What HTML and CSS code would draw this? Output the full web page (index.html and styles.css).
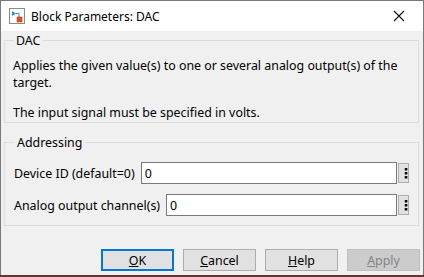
FILE: index.html
```html
<!DOCTYPE html>
<html lang="en">
<head>
    <meta charset="UTF-8">
    <title>Block Parameters: DAC</title>
    <link rel="stylesheet" href="styles.css">
</head>
<body>

<div class="window">
    <div class="titlebar">
        <svg class="app-icon" width="16" height="16" viewBox="0 0 16 16">
            <rect x="0.5" y="0.5" width="15" height="15" fill="#fff" stroke="#8a8a8a"/>
            <path d="M3 3 L3 8 L7 5.5 Z" fill="#2f8fd8"/>
            <path d="M7 5.5 H10 V10" fill="none" stroke="#2f8fd8" stroke-width="1"/>
            <rect x="8" y="9" width="5" height="5" fill="#e0501c" stroke="#a83010" stroke-width="0.5"/>
        </svg>
        <span class="title">Block Parameters: DAC</span>
        <svg class="close" width="12" height="12" viewBox="0 0 12 12">
            <path d="M1 1 L11 11 M11 1 L1 11" stroke="#111" stroke-width="1.1"/>
        </svg>
    </div>

    <div class="content">
        <fieldset class="group group-desc">
            <legend>DAC</legend>
            <p>Applies the given value(s) to one or several analog output(s) of the target.</p>
            <p class="gap">The input signal must be specified in volts.</p>
        </fieldset>

        <fieldset class="group group-params">
            <legend>Addressing</legend>
            <div class="row">
                <label>Device ID (default=0)</label>
                <input type="text" value="0">
                <button class="more">&#8942;</button>
            </div>
            <div class="row">
                <label>Analog output channel(s)</label>
                <input type="text" value="0">
                <button class="more">&#8942;</button>
            </div>
        </fieldset>

        <div class="buttons">
            <button class="btn default"><u>O</u>K</button>
            <button class="btn"><u>C</u>ancel</button>
            <button class="btn"><u>H</u>elp</button>
            <button class="btn disabled"><u>A</u>pply</button>
        </div>
    </div>
</div>

</body>
</html>
```

FILE: styles.css
```css
body {
    margin: 0;
    background-color: #5e3434;
    font-family: "Noto Sans", "Liberation Sans", sans-serif;
    font-size: 12px;
    color: #000;
}
.window {
    width: 422px;
    height: 274px;
    border: 1px solid #7a7a7a;
    border-bottom: none;
    background-color: #f0f0f0;
    display: flex;
    flex-direction: column;
}
.titlebar {
    height: 30px;
    background-color: #fff;
    display: flex;
    align-items: center;
    padding: 0 18px 0 8px;
}
.app-icon {
    margin-right: 6px;
}
.title {
    flex: 1;
    font-size: 12px;
}
.content {
    padding: 1px 3px 0 3px;
    font-size: 12.4px;
}
.group {
    margin: 0 1px 0 0;
    padding: 0 9px 0 8px;
    border: 1px solid #dcdcdc;
    min-width: 0;
}
.group legend {
    padding: 0 3px 0 2px;
    margin-left: 1px;
}
.group-desc {
    height: 81px;
    padding-top: 8px;
}
.group-desc p {
    margin: 0;
    line-height: 17px;
}
.group-desc .gap {
    margin-top: 13px;
}
.group-params {
    margin-top: 11px;
    height: 79px;
    padding: 11px 9px 0 9px;
}
.row {
    display: flex;
    align-items: center;
    height: 22px;
    margin-bottom: 10px;
}
.row label {
    margin-right: 6px;
    white-space: nowrap;
}
.row input {
    flex: 1;
    min-width: 0;
    height: 22px;
    box-sizing: border-box;
    border: 1px solid #7a7a7a;
    padding: 0 3px;
    font-family: inherit;
    font-size: 12.4px;
    background-color: #fff;
}
.more {
    width: 11px;
    height: 20px;
    margin-left: 1px;
    padding: 0;
    border: 1px solid #adadad;
    background-color: #e1e1e1;
    font-size: 14px;
    font-weight: bold;
    line-height: 18px;
    font-family: "DejaVu Sans", sans-serif;
    color: #000;
}
.buttons {
    display: flex;
    justify-content: flex-end;
    gap: 9px;
    margin-top: 23px;
}
.btn {
    width: 73px;
    height: 22px;
    box-sizing: border-box;
    border: 1px solid #adadad;
    background-color: #e1e1e1;
    font-family: inherit;
    font-size: 12.4px;
    color: #000;
    padding: 0;
}
.btn.default {
    border: 2px solid #0078d7;
}
.btn.disabled {
    background-color: #cccccc;
    border-color: #bfbfbf;
    color: #838383;
}
```
